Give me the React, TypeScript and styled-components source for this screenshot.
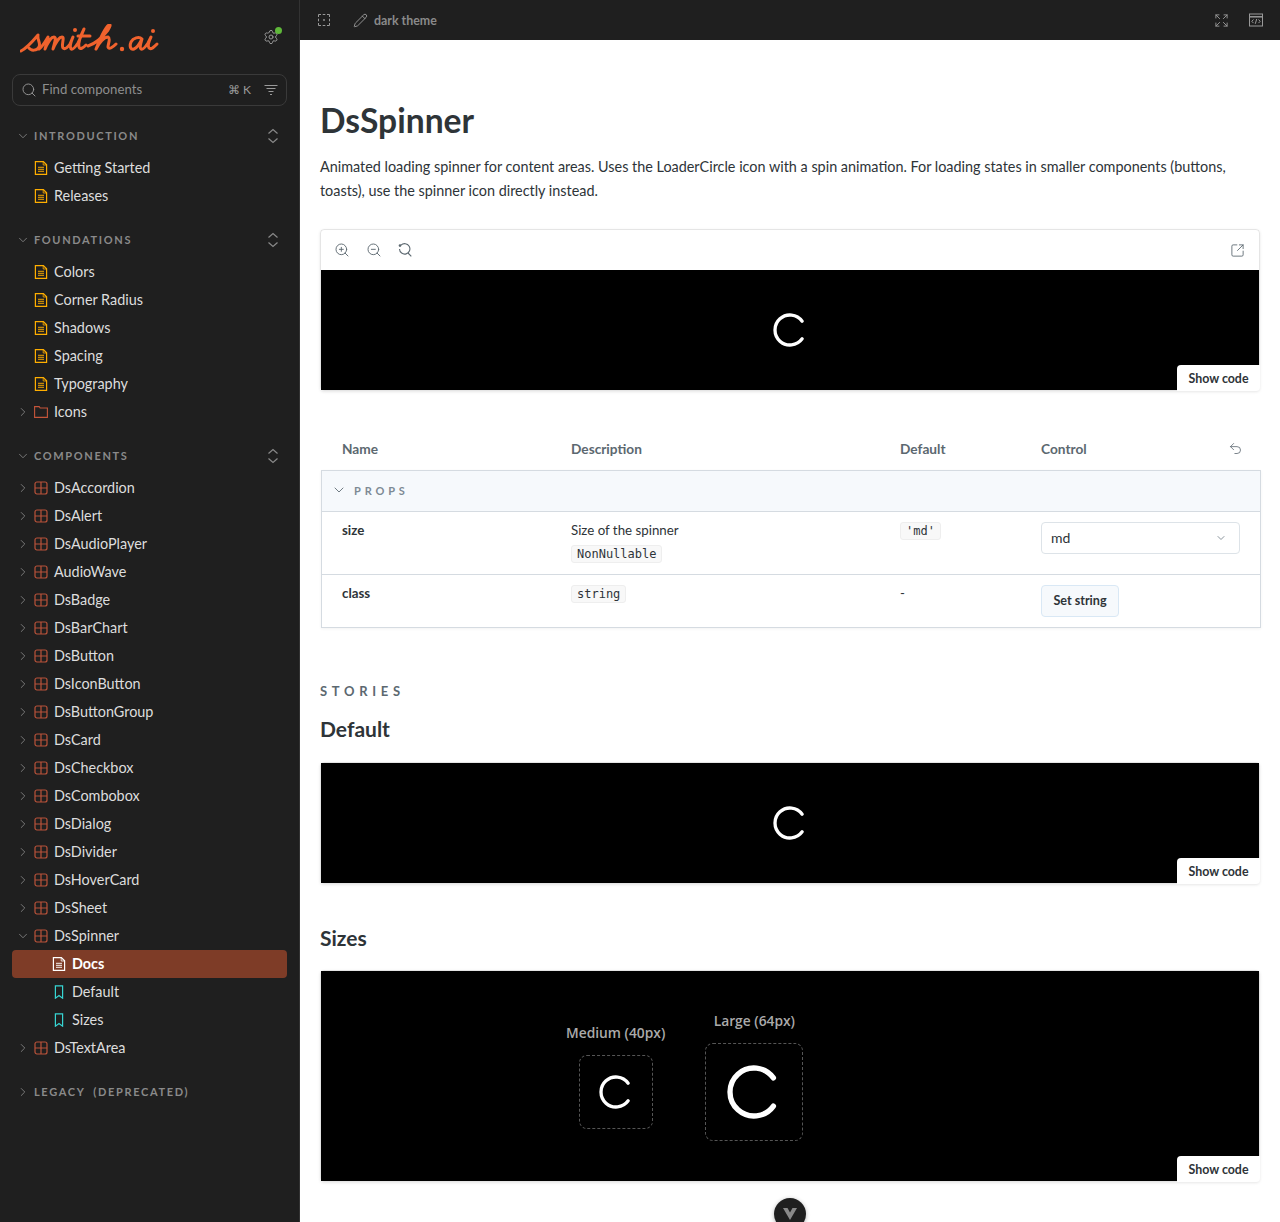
import styled, { createGlobalStyle } from "styled-components";
import {
  ChevronDown,
  ChevronRight,
  Expand,
  LoaderCircle,
  Pencil,
  Search,
  Settings,
  SquareArrowOutUpRight,
  Undo2,
  ZoomIn,
  ZoomOut,
} from "lucide-react";

const GlobalStyle = createGlobalStyle`
  html, body { margin: 0; height: 100%; background: #fff; }
  body { font-family: "Lato", "Open Sans", sans-serif; color: #2e3438; }
  * { box-sizing: border-box; }
`;

const sections = [
  {
    title: "Introduction",
    items: [
      { label: "Getting Started", kind: "doc" },
      { label: "Releases", kind: "doc" },
    ],
  },
  {
    title: "Foundations",
    items: [
      { label: "Colors", kind: "doc" },
      { label: "Corner Radius", kind: "doc" },
      { label: "Shadows", kind: "doc" },
      { label: "Spacing", kind: "doc" },
      { label: "Typography", kind: "doc" },
      { label: "Icons", kind: "folder" },
    ],
  },
  {
    title: "Components",
    items: [
      "DsAccordion",
      "DsAlert",
      "DsAudioPlayer",
      "AudioWave",
      "DsBadge",
      "DsBarChart",
      "DsButton",
      "DsIconButton",
      "DsButtonGroup",
      "DsCard",
      "DsCheckbox",
      "DsCombobox",
      "DsDialog",
      "DsDivider",
      "DsHoverCard",
      "DsSheet",
    ].map((label) => ({ label, kind: "component" })),
  },
];

function DocIcon({ color }: { color: string }) {
  return (
    <svg width="14" height="14" viewBox="0 0 14 14" fill="none" stroke={color} strokeWidth="1.2">
      <path d="M1.400.6h8l3.200 3.200v9.600H1.400z" />
      <path d="M9.200.6v3.400h3.400" strokeWidth="0.8" />
      <path d="M4 6.400h6M4 8.400h6M4 10.400h6" strokeWidth="1.2" opacity="0.75" />
    </svg>
  );
}

function ComponentIcon() {
  return (
    <svg width="14" height="14" viewBox="0 0 14 14" fill="none" stroke="#b9533a" strokeWidth="1.2">
      <rect x="1" y="1" width="12" height="12" rx="2" />
      <path d="M7 1v12M1 7h12" />
    </svg>
  );
}

function FolderIcon() {
  return (
    <svg width="14" height="14" viewBox="0 0 14 14" fill="none" stroke="#c4553a" strokeWidth="1.1">
      <path d="M.6 1.600h4.600l1 1.400h7.200v9.400H.6z" />
    </svg>
  );
}

function BookmarkIcon() {
  return (
    <svg width="14" height="14" viewBox="0 0 14 14" fill="none" stroke="#37d5d3" strokeWidth="1.2">
      <path d="M3.400.8h7.200v12.400L7 10.600l-3.600 2.600z" />
    </svg>
  );
}

function UpDownIcon() {
  return (
    <svg width="12" height="16" viewBox="0 0 12 16" fill="none" stroke="#8a8a8a" strokeWidth="1.2">
      <path d="M1.500 5.500 6 1.500l4.500 4M1.500 10.500l4.500 4 4.500-4" />
    </svg>
  );
}

function FilterIcon() {
  return (
    <svg width="14" height="14" viewBox="0 0 14 14" fill="none" stroke="#9a9a9a" strokeWidth="1.1">
      <path d="M.5 2.500h13M2.500 5.500h9M4.500 8.500h5M6 11.500h2" />
    </svg>
  );
}

function FocusIcon() {
  return (
    <svg width="12" height="12" viewBox="0 0 12 12" fill="none" stroke="#999" strokeWidth="1">
      <path d="M.5 3V.5H3M4.700.5h2.600M9 .5h2.500V3M11.500 4.700v2.600M11.500 9v2.500H9M7.300 11.500H4.700M3 11.500H.5V9M.5 7.300V4.700" />
      <circle cx="6" cy="6" r="0.9" fill="#999" stroke="none" />
    </svg>
  );
}

function CodeWindowIcon() {
  return (
    <svg width="14" height="14" viewBox="0 0 14 14" fill="none" stroke="#999" strokeWidth="1">
      <rect x="0.500" y="1" width="13" height="12" />
      <path d="M.5 3.800h13" strokeWidth="1.500" />
      <path d="M4.500 6.500 2.800 8.300l1.700 1.800M9.500 6.500l1.700 1.800-1.700 1.800M7.700 6 6.300 10.800" />
    </svg>
  );
}

function ResetZoomIcon() {
  return (
    <svg width="14" height="14" viewBox="0 0 14 14" fill="none" stroke="#5c6870" strokeWidth="1.1">
      <path d="M3 2.200A5.200 5.200 0 1 1 1.500 6" />
      <path d="m10 10 3.300 3.300" />
      <circle cx="2" cy="2.600" r="1.300" fill="#5c6870" stroke="none" />
    </svg>
  );
}

function Logo() {
  return (
    <LogoMark viewBox="0 0 140 30" role="img" aria-label="smith.ai">
      <path d="M1 27C7 24 13 17 18 11c-1 5 3 8 1 12-2 4-8 4-10 1" />
      <path d="M19 25c4-3 7-9 9-12 0 4-2 8-3 12 2-5 6-12 9-12 3 0 0 7-1 12 2-5 6-12 9-12 3 0-1 8 1 11 2 2 5-1 7-4 1-2 2-5 3-7-2 5-4 9-2 12 2 1 5-3 7-6 2-4 4-9 6-14-3 6-6 14-5 18 1 3 4 1 7-2" />
      <path d="M58 12h12" />
      <path d="M68 22c6-2 14-8 20-16 2-3 3-6 1-5-4 2-9 14-13 24 3-6 8-12 12-12 3 1 0 7 0 10 1 3 5 0 8-3" />
      <path d="M122 15c-3-3-9-1-11 3-2 5 0 8 3 7 3-1 6-6 8-10-1 4-3 8-1 10 2 1 5-3 7-6 1-2 2-4 3-6-2 4-4 8-2 11 2 2 5-1 8-4" />
      <LogoDot cx="102" cy="25" r="2.200" />
      <LogoDot cx="133" cy="7" r="2" />
      <LogoDot cx="55" cy="6" r="2" />
    </LogoMark>
  );
}

function TreeRow({ label, kind }: { label: string; kind: string }) {
  return (
    <Row>
      {kind === "doc" ? <ChevronSpace /> : <Closed size={14} strokeWidth={1.4} />}
      {kind === "doc" && <DocIcon color="#ffae00" />}
      {kind === "folder" && <FolderIcon />}
      {kind === "component" && <ComponentIcon />}
      <RowLabel>{label}</RowLabel>
    </Row>
  );
}

function ShowCode() {
  return <ShowCodeButton>Show code</ShowCodeButton>;
}

export default function App() {
  return (
    <Layout>
      <GlobalStyle />
      <Sidebar>
        <Brand>
          <Logo />
          <GearWrap>
            <Settings size={16} color="#999" strokeWidth={1.5} />
            <StatusDot />
          </GearWrap>
        </Brand>
        <SearchBox>
          <Search size={16} color="#999" strokeWidth={1.4} />
          <Placeholder>Find components</Placeholder>
          <Shortcut>⌘ K</Shortcut>
          <FilterIcon />
        </SearchBox>
        {sections.map((section) => (
          <Section key={section.title}>
            <SectionHeader>
              <Opened size={14} strokeWidth={1.4} />
              <SectionTitle>{section.title}</SectionTitle>
              <UpDownIcon />
            </SectionHeader>
            <RowList>
              {section.items.map((item) => (
                <TreeRow key={item.label} label={item.label} kind={item.kind} />
              ))}
              {section.title === "Components" && (
                <>
                  <Row>
                    <Opened size={14} strokeWidth={1.4} />
                    <ComponentIcon />
                    <RowLabel>DsSpinner</RowLabel>
                  </Row>
                  <Row $nested $active>
                    <DocIcon color="#fff" />
                    <RowLabel>Docs</RowLabel>
                  </Row>
                  <Row $nested>
                    <BookmarkIcon />
                    <RowLabel>Default</RowLabel>
                  </Row>
                  <Row $nested>
                    <BookmarkIcon />
                    <RowLabel>Sizes</RowLabel>
                  </Row>
                  <TreeRow label="DsTextArea" kind="component" />
                </>
              )}
            </RowList>
          </Section>
        ))}
        <Section>
          <SectionHeader>
            <Closed size={14} strokeWidth={1.4} />
            <SectionTitle>Legacy (deprecated)</SectionTitle>
          </SectionHeader>
        </Section>
      </Sidebar>

      <Main>
        <TopBar>
          <FocusIcon />
          <ThemeTool>
            <Pencil size={15} color="#999" strokeWidth={1.5} />
            dark theme
          </ThemeTool>
          <TopBarEnd>
            <Expand size={15} color="#999" strokeWidth={1.5} />
            <CodeWindowIcon />
          </TopBarEnd>
        </TopBar>
        <Content>
          <Title>DsSpinner</Title>
          <Intro>
            Animated loading spinner for content areas. Uses the LoaderCircle icon with a spin animation. For loading states in
            smaller components (buttons, toasts), use the spinner icon directly instead.
          </Intro>

          <Card>
            <CardTools>
              <ZoomIn size={16} color="#5c6870" strokeWidth={1.4} />
              <ZoomOut size={16} color="#5c6870" strokeWidth={1.4} />
              <ResetZoomIcon />
              <CardToolsEnd>
                <SquareArrowOutUpRight size={15} color="#5c6870" strokeWidth={1.4} />
              </CardToolsEnd>
            </CardTools>
            <Canvas $height={120}>
              <Spinner size={40} strokeWidth={2} />
            </Canvas>
            <ShowCode />
          </Card>

          <ArgsHead>
            <HeadCell $first>Name</HeadCell>
            <HeadCell>Description</HeadCell>
            <HeadCell>Default</HeadCell>
            <HeadCell>
              Control
              <Undo2 size={15} color="#5c6870" strokeWidth={1.3} />
            </HeadCell>
          </ArgsHead>
          <ArgsTable>
            <PropsBand>
              <ChevronDown size={16} color="#5c6870" strokeWidth={1.3} />
              PROPS
            </PropsBand>
            <ArgRow>
              <ArgName>size</ArgName>
              <ArgCell>
                <ArgText>Size of the spinner</ArgText>
                <Code>NonNullable</Code>
              </ArgCell>
              <ArgCell>
                <Code>'md'</Code>
              </ArgCell>
              <ArgCell>
                <SelectBox>
                  <SelectValue>md</SelectValue>
                  <ChevronDown size={12} color="#8a949c" />
                </SelectBox>
              </ArgCell>
            </ArgRow>
            <ArgRow>
              <ArgName>class</ArgName>
              <ArgCell>
                <Code>string</Code>
              </ArgCell>
              <ArgCell>
                <ArgText>-</ArgText>
              </ArgCell>
              <ArgCell>
                <SetButton>Set string</SetButton>
              </ArgCell>
            </ArgRow>
          </ArgsTable>

          <StoriesLabel>STORIES</StoriesLabel>
          <StoryTitle>Default</StoryTitle>
          <Card>
            <Canvas $height={120}>
              <Spinner size={40} strokeWidth={2} />
            </Canvas>
            <ShowCode />
          </Card>

          <StoryTitle $gap>Sizes</StoryTitle>
          <Card>
            <SizesCanvas>
              <SizeColumn>
                <SizeLabel>Medium (40px)</SizeLabel>
                <SizeBox>
                  <Spinner size={40} strokeWidth={2} />
                </SizeBox>
              </SizeColumn>
              <SizeColumn>
                <SizeLabel>Large (64px)</SizeLabel>
                <SizeBox>
                  <Spinner size={64} strokeWidth={2} />
                </SizeBox>
              </SizeColumn>
            </SizesCanvas>
            <ShowCode />
          </Card>
        </Content>
        <ScrollHint>
          <svg width="14" height="12" viewBox="0 0 14 12" fill="#8a8a8a">
            <path d="M0 0h4.500L7 4.500 9.500 0H14L7 12z" />
          </svg>
        </ScrollHint>
      </Main>
    </Layout>
  );
}

const Layout = styled.div`
  display: flex;
  height: 100vh;
  overflow: hidden;
`;

const Sidebar = styled.aside`
  width: 300px;
  flex: none;
  padding: 0 12px;
  background: #1f1f1f;
  border-right: 1px solid #333;
  color: #ddd;
  overflow: hidden;
`;

const Brand = styled.div`
  display: flex;
  align-items: flex-start;
  justify-content: space-between;
  height: 74px;
  padding: 24px 8px 0;
`;

const LogoMark = styled.svg`
  width: 140px;
  height: 30px;
  fill: none;
  stroke: #f0622d;
  stroke-width: 3;
  stroke-linecap: round;
  stroke-linejoin: round;
`;

const LogoDot = styled.circle`
  fill: #f0622d;
  stroke: none;
`;

const GearWrap = styled.div`
  position: relative;
  margin-top: 5px;
  height: 16px;
`;

const StatusDot = styled.span`
  position: absolute;
  top: -2px;
  right: -3px;
  width: 7px;
  height: 7px;
  border-radius: 50%;
  background: #5fb83a;
`;

const SearchBox = styled.div`
  display: flex;
  align-items: center;
  height: 32px;
  padding: 0 8px;
  border: 1px solid #3a3a3a;
  border-radius: 8px;
`;

const Placeholder = styled.span`
  flex: 1;
  margin-left: 5px;
  padding-bottom: 3px;
  font-size: 13.2px;
  color: #8e8e8e;
`;

const Shortcut = styled.span`
  margin-right: 13px;
  padding-bottom: 1px;
  font-size: 12px;
  color: #999;
`;

const Section = styled.section`
  margin-top: 18px;
`;

const SectionHeader = styled.div`
  display: flex;
  align-items: center;
  gap: 5px;
  height: 24px;
  padding: 0 8px 0 5px;
`;

const Opened = styled(ChevronDown)`
  flex: none;
  margin: 0 -1px;
  color: #8a8a8a;
`;

const Closed = styled(ChevronRight)`
  flex: none;
  margin: 0 -1px;
  color: #8a8a8a;
`;

const SectionTitle = styled.span`
  flex: 1;
  padding-bottom: 2px;
  font-size: 11px;
  font-weight: 700;
  letter-spacing: 0.15em;
  word-spacing: 4px;
  text-transform: uppercase;
  color: #8a8a8a;
`;

const RowList = styled.div`
  margin-top: 6px;
`;

const Row = styled.div<{ $nested?: boolean; $active?: boolean }>`
  display: flex;
  align-items: center;
  gap: 5px;
  height: 28px;
  padding-left: ${(p) => (p.$nested ? "40px" : "5px")};
  border-radius: 4px;
  font-size: 14.4px;
  font-weight: ${(p) => (p.$active ? 700 : 400)};
  color: ${(p) => (p.$active ? "#fff" : "#ddd")};
  background: ${(p) => (p.$active ? "#7e3c27" : "transparent")};
`;

const ChevronSpace = styled.span`
  width: 12px;
`;

const RowLabel = styled.span`
  margin-left: 1px;
  padding-bottom: 2px;
`;

const Main = styled.main`
  position: relative;
  flex: 1;
  min-width: 0;
`;

const TopBar = styled.header`
  display: flex;
  align-items: center;
  height: 40px;
  padding: 0 17px 0 18px;
  background: #1f1f1f;
`;

const ThemeTool = styled.div`
  display: flex;
  align-items: center;
  gap: 6px;
  margin-left: 23px;
  font-size: 12.4px;
  font-weight: 700;
  color: #8a8a8a;
`;

const TopBarEnd = styled.div`
  display: flex;
  align-items: center;
  gap: 20px;
  margin-left: auto;
`;

const Content = styled.div`
  padding: 0 20px;
`;

const Title = styled.h1`
  margin: 59px 0 0;
  font-size: 33.6px;
  line-height: 42px;
  font-weight: 700;
  color: #2e3438;
`;

const Intro = styled.p`
  margin: 14px 0 0;
  font-size: 14.4px;
  line-height: 24px;
  color: #2e3438;
`;

const Card = styled.div`
  position: relative;
  margin-top: 26px;
  border: 1px solid rgba(0, 0, 0, 0.1);
  border-radius: 4px;
  box-shadow: 0 1px 3px rgba(0, 0, 0, 0.1);
`;

const CardTools = styled.div`
  display: flex;
  align-items: center;
  gap: 16px;
  height: 40px;
  padding: 0 14px 0 13px;
`;

const CardToolsEnd = styled.div`
  display: flex;
  margin-left: auto;
`;

const Canvas = styled.div<{ $height: number }>`
  display: flex;
  align-items: center;
  justify-content: center;
  height: ${(p) => p.$height}px;
  background: #000;
`;

const Spinner = styled(LoaderCircle)`
  display: block;
  color: #fff;
  transform: rotate(36deg);
`;

const ShowCodeButton = styled.button`
  position: absolute;
  right: -1px;
  bottom: -1px;
  width: 83px;
  height: 26px;
  padding: 0;
  border: 0;
  border-radius: 4px 0 4px 0;
  background: #fff;
  font: 700 12.4px "Lato", sans-serif;
  color: #2e3438;
`;

const gridColumns = "249px 329px 141px 1fr";

const ArgsHead = styled.div`
  display: grid;
  grid-template-columns: ${gridColumns};
  margin: 38px -1px 0 1px;
  height: 41px;
  padding: 0 0 2px 1px;
`;

const HeadCell = styled.div<{ $first?: boolean }>`
  display: flex;
  align-items: center;
  justify-content: space-between;
  padding-left: ${(p) => (p.$first ? "20px" : "0")};
  padding-right: 18px;
  font-size: 13.7px;
  font-weight: 700;
  color: #5c6870;
`;

const ArgsTable = styled.div`
  margin: 0 -1px 0 1px;
  border: 1px solid #d5dbe1;
  box-shadow: 0 1px 3px rgba(0, 0, 0, 0.05);
`;

const PropsBand = styled.div`
  display: flex;
  align-items: center;
  gap: 7px;
  height: 41px;
  padding: 0 0 2px 9px;
  background: #f6f9fc;
  border-bottom: 1px solid #d5dbe1;
  font-size: 11px;
  font-weight: 700;
  letter-spacing: 0.35em;
  color: #7d8a94;
`;

const ArgRow = styled.div`
  display: grid;
  grid-template-columns: ${gridColumns};
  padding: 10px 0 11px;
  border-bottom: 1px solid #d5dbe1;

  &:last-child {
    padding-bottom: 10px;
    border-bottom: 0;
  }
`;

const ArgName = styled.div`
  margin-top: -1px;
  padding-left: 20px;
  font-size: 13.3px;
  line-height: 18px;
  font-weight: 700;
  color: #2e3438;
`;

const ArgCell = styled.div`
  display: flex;
  flex-direction: column;
  align-items: flex-start;
  gap: 5px;
  font-size: 13.3px;
  color: #2e3438;
`;

const ArgText = styled.span`
  margin-top: -1px;
  margin-bottom: 1px;
  line-height: 18px;
`;

const Code = styled.code`
  padding: 0 5px;
  height: 18px;
  border: 1px solid #eee;
  border-radius: 3px;
  background: #f8f8f8;
  font: 12px/16px "DejaVu Sans Mono", monospace;
  color: #2e3438;
`;

const SelectBox = styled.div`
  display: flex;
  align-items: center;
  justify-content: space-between;
  width: 199px;
  height: 32px;
  padding: 0 12px 0 9px;
  border: 1px solid #dde3e8;
  border-radius: 4px;
  font-size: 14px;
`;

const SelectValue = styled.span`
  padding-bottom: 2px;
`;

const SetButton = styled.button`
  width: 78px;
  height: 32px;
  padding: 0 0 1px;
  border: 1px solid #d9e8f5;
  border-radius: 4px;
  background: #f6f9fc;
  font: 700 12.6px "Lato", sans-serif;
  color: #2e3438;
`;

const StoriesLabel = styled.div`
  margin-top: 54px;
  font-size: 13px;
  line-height: 18px;
  font-weight: 700;
  letter-spacing: 0.36em;
  color: #5c6870;
`;

const StoryTitle = styled.h3<{ $gap?: boolean }>`
  margin: ${(p) => (p.$gap ? "40px" : "15px")} 0 ${(p) => (p.$gap ? "-8px" : "-7px")};
  font-size: 21px;
  line-height: 28px;
  font-weight: 700;
  color: #2e3438;
`;

const SizesCanvas = styled.div`
  display: flex;
  align-items: center;
  gap: 40px;
  height: 210px;
  padding: 0 0 1px 245px;
  background: #000;
`;

const SizeColumn = styled.div`
  display: flex;
  flex-direction: column;
  align-items: center;
  gap: 12px;
`;

const SizeLabel = styled.div`
  font-family: "Open Sans", sans-serif;
  font-size: 13.8px;
  line-height: 20px;
  font-weight: 600;
  color: #aaa;
`;

const SizeBox = styled.div`
  padding: 16px;
  border: 1px dashed #555;
  border-radius: 8px;
`;

const ScrollHint = styled.div`
  position: absolute;
  left: 474px;
  top: 1198px;
  display: flex;
  justify-content: center;
  width: 32px;
  height: 32px;
  padding-top: 10px;
  border-radius: 50%;
  background: #1f1f1f;
  box-shadow: 0 1px 4px rgba(0, 0, 0, 0.3);
`;
